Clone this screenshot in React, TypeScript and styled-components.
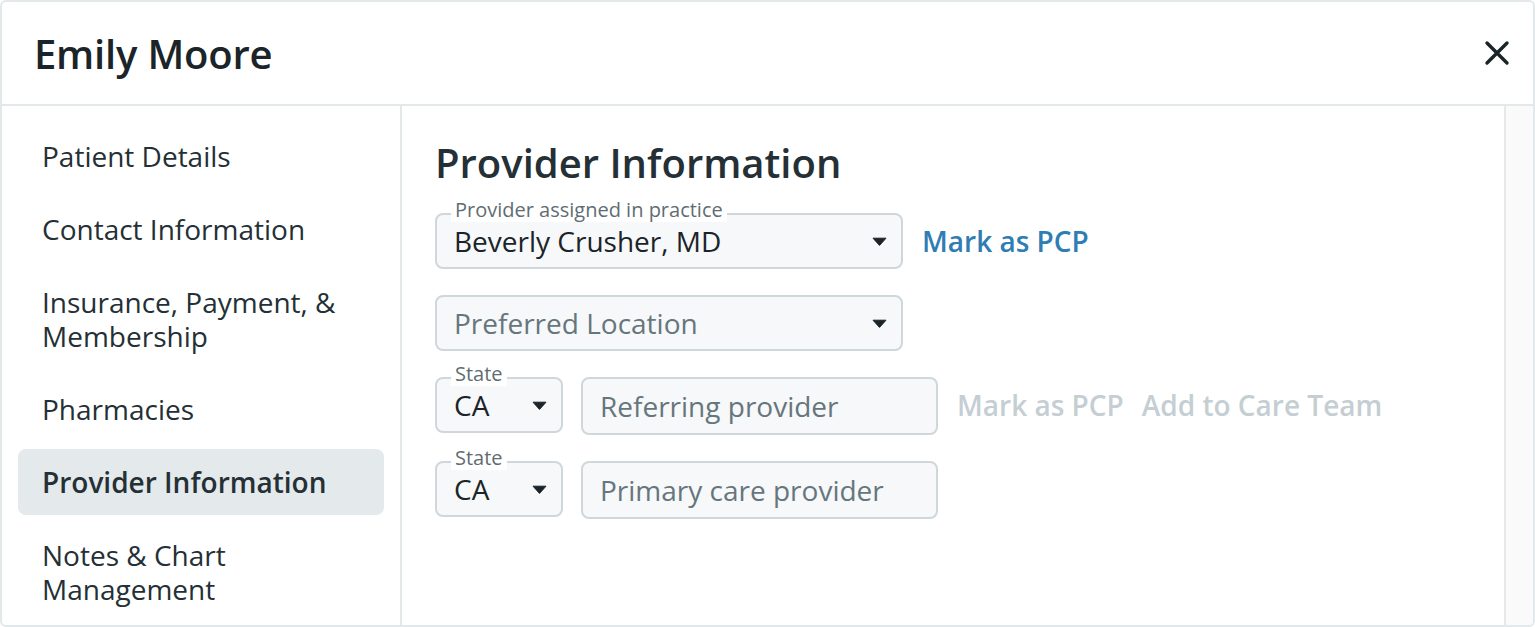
import { createGlobalStyle, styled } from "styled-components";

const GlobalStyle = createGlobalStyle`
  html, body {
    margin: 0;
    padding: 0;
    background: #ffffff;
  }
  * {
    box-sizing: border-box;
  }
`;

const Modal = styled.div`
  width: 1535px;
  height: 627px;
  display: flex;
  flex-direction: column;
  border: 2px solid #e3e8eb;
  border-radius: 6px;
  background: #ffffff;
  overflow: hidden;
  font-family: "Open Sans", "Noto Sans", sans-serif;
  color: #1d272c;
`;

const Header = styled.header`
  height: 104px;
  flex-shrink: 0;
  display: flex;
  align-items: center;
  justify-content: space-between;
  padding: 0 21px 0 32px;
  border-bottom: 2px solid #e3e8eb;
`;

const Title = styled.h1`
  margin: 0;
  font-size: 40px;
  font-weight: 600;
  letter-spacing: -0.2px;
  color: #1b2428;
`;

const CloseBtn = styled.button`
  width: 30px;
  height: 30px;
  padding: 0;
  border: none;
  background: none;
  display: flex;
  align-items: center;
  justify-content: center;
  cursor: pointer;
`;

const Body = styled.div`
  flex: 1;
  display: flex;
  min-height: 0;
`;

const Sidebar = styled.nav`
  width: 400px;
  flex-shrink: 0;
  display: flex;
  flex-direction: column;
  gap: 7px;
  padding: 17px 16px 0;
  border-right: 2px solid #e3e8eb;
  overflow: hidden;
`;

const NavItem = styled.div<{ $active?: boolean }>`
  padding: 16px 24px;
  border-radius: 8px;
  font-size: 28px;
  line-height: 34px;
  font-weight: ${(p) => (p.$active ? 600 : 400)};
  background: ${(p) => (p.$active ? "#e4e9ec" : "transparent")};
  color: #243035;
`;

const Main = styled.main`
  flex: 1;
  display: flex;
  flex-direction: column;
  gap: 26px;
  padding: 33px 33px 0;
  overflow: hidden;
`;

const Heading = styled.h2`
  margin: 0;
  font-size: 40px;
  line-height: 48px;
  font-weight: 600;
  color: #243035;
`;

const Row = styled.div`
  display: flex;
  align-items: flex-start;
  gap: 18px;
`;

const Field = styled.div<{ $width: number; $height?: number }>`
  position: relative;
  width: ${(p) => p.$width}px;
  height: ${(p) => p.$height ?? 56}px;
  flex-shrink: 0;
  display: flex;
  align-items: center;
  justify-content: space-between;
  padding: 0 14px 0 17px;
  border: 2px solid #cfd7db;
  border-radius: 8px;
  background: #f6f8f9;
  font-size: 28px;
`;

const FloatLabel = styled.span`
  position: absolute;
  top: -17px;
  left: 14px;
  padding: 0 4px;
  background: #ffffff;
  font-size: 20px;
  line-height: 24px;
  color: #5f6d73;
`;

const Value = styled.span<{ $placeholder?: boolean }>`
  color: ${(p) => (p.$placeholder ? "#66767d" : "#1b2428")};
  white-space: nowrap;
`;

const Links = styled.div`
  display: flex;
  align-items: center;
  gap: 18px;
  height: 56px;
  margin-left: 1px;
`;

const Link = styled.a<{ $muted?: boolean }>`
  font-size: 28px;
  font-weight: 600;
  color: ${(p) => (p.$muted ? "#c4ced3" : "#2f7db3")};
  text-decoration: none;
  white-space: nowrap;
  cursor: pointer;
`;

const Track = styled.div`
  width: 29px;
  flex-shrink: 0;
  border-left: 2px solid #e8e8e8;
  background: #fafafa;
`;

function Caret() {
  return (
    <svg width="15" height="9" viewBox="0 0 15 9">
      <path d="M1 1.2 L14 1.2 L7.5 8.4 Z" fill="#1b2428" stroke="#1b2428" strokeWidth="1" strokeLinejoin="round" />
    </svg>
  );
}

function CloseIcon() {
  return (
    <svg width="26" height="26" viewBox="0 0 26 26">
      <path d="M3 3 L23 23 M23 3 L3 23" stroke="#1b2428" strokeWidth="3.4" strokeLinecap="round" />
    </svg>
  );
}

const navItems: { label: string; lines: string[] }[] = [
  { label: "Patient Details", lines: ["Patient Details"] },
  { label: "Contact Information", lines: ["Contact Information"] },
  { label: "Insurance", lines: ["Insurance, Payment, &", "Membership"] },
  { label: "Pharmacies", lines: ["Pharmacies"] },
  { label: "Provider Information", lines: ["Provider Information"] },
  { label: "Notes", lines: ["Notes & Chart", "Management"] },
];

const NavLine = styled.div`
  white-space: nowrap;
`;

function StateSelect() {
  return (
    <Field $width={128}>
      <FloatLabel>State</FloatLabel>
      <Value>CA</Value>
      <Caret />
    </Field>
  );
}

export default function App() {
  return (
    <>
      <GlobalStyle />
      <Modal>
        <Header>
          <Title>Emily Moore</Title>
          <CloseBtn aria-label="Close">
            <CloseIcon />
          </CloseBtn>
        </Header>
        <Body>
          <Sidebar>
            {navItems.map((item) => (
              <NavItem key={item.label} $active={item.label === "Provider Information"}>
                {item.lines.map((line) => (
                  <NavLine key={line}>{line}</NavLine>
                ))}
              </NavItem>
            ))}
          </Sidebar>
          <Main>
            <Heading>Provider Information</Heading>
            <Row>
              <Field $width={468}>
                <FloatLabel>Provider assigned in practice</FloatLabel>
                <Value>Beverly Crusher, MD</Value>
                <Caret />
              </Field>
              <Links>
                <Link>Mark as PCP</Link>
              </Links>
            </Row>
            <Row>
              <Field $width={468}>
                <Value $placeholder>Preferred Location</Value>
                <Caret />
              </Field>
            </Row>
            <Row>
              <StateSelect />
              <Field $width={357} $height={58}>
                <Value $placeholder>Referring provider</Value>
              </Field>
              <Links>
                <Link $muted>Mark as PCP</Link>
                <Link $muted>Add to Care Team</Link>
              </Links>
            </Row>
            <Row>
              <StateSelect />
              <Field $width={357} $height={58}>
                <Value $placeholder>Primary care provider</Value>
              </Field>
            </Row>
          </Main>
          <Track />
        </Body>
      </Modal>
    </>
  );
}
